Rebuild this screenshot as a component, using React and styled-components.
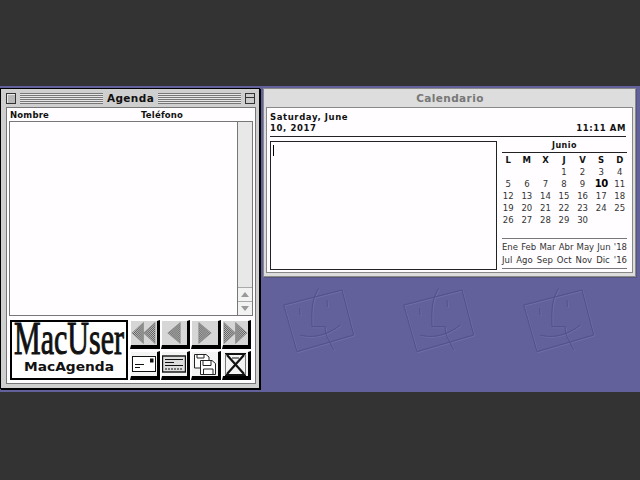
import React from "react";
import styled, { createGlobalStyle } from "styled-components";

const Global = createGlobalStyle`
  html, body { margin: 0; padding: 0; background: #333333; }
  body { width: 640px; height: 480px; overflow: hidden; font-family: "DejaVu Sans", sans-serif; }
`;

const Desktop = styled.div`
  position: relative;
  margin-top: 86px;
  height: 306px;
  background: #62619b;
`;

const Wallpaper = styled.div`
  display: flex;
  gap: 40px;
  padding: 199px 0 0 280px;
`;

const Window = styled.div`
  position: absolute;
  top: 2px;
  left: ${(p) => p.$left}px;
  width: ${(p) => p.$width}px;
  height: ${(p) => p.$height}px;
  box-sizing: border-box;
  display: flex;
  flex-direction: column;
  background: ${(p) => (p.$active ? "#cfcfcf" : "#dddddd")};
  border: 1px solid ${(p) => (p.$active ? "#000" : "#8a8a8a")};
  box-shadow: 1px 1px 0 ${(p) => (p.$active ? "#000" : "#55557f")};
`;

const TitleBar = styled.div`
  flex: none;
  height: 18px;
  display: flex;
  align-items: center;
  justify-content: center;
  gap: 4px;
  padding: 0 4px 0 5px;
`;

const TitleText = styled.div`
  font-size: 10.5px;
  font-weight: 700;
  letter-spacing: 0.4px;
  color: ${(p) => (p.$active ? "#111" : "#777")};
`;

const Stripes = styled.div`
  flex: 1;
  height: 11px;
  background: repeating-linear-gradient(to bottom, #777 0 1px, #e6e6e6 1px 2px);
`;

const CloseBox = styled.div`
  width: 10px;
  height: 11px;
  box-sizing: border-box;
  border: 1px solid #333;
  background: #b9b9b9;
  box-shadow: inset 1px 1px 0 #e8e8e8;
`;

const ZoomBox = styled.div`
  width: 10px;
  height: 11px;
  box-sizing: border-box;
  border: 1px solid #333;
  background: linear-gradient(to bottom, #ccc 0 3px, #333 3px 4px, #ccc 4px 100%);
`;

const AgendaBody = styled.div`
  flex: 1;
  margin: 0 3px 4px 5px;
  padding: 0 2px;
  background: #fffdff;
  border: 1px solid #777;
  display: flex;
  flex-direction: column;
`;

const ListHead = styled.div`
  flex: none;
  height: 13px;
  display: grid;
  grid-template-columns: 131px 1fr;
  align-items: center;
  padding-left: 1px;
  font-size: 8.5px;
  font-weight: 700;
  letter-spacing: 0.2px;
  color: #111;
`;

const List = styled.div`
  flex: none;
  height: 195px;
  box-sizing: border-box;
  border: 1px solid #777;
  display: flex;
  justify-content: flex-end;
`;

const Scrollbar = styled.div`
  width: 14px;
  border-left: 1px solid #777;
  background: #e8e8e8;
  display: flex;
  flex-direction: column;
  justify-content: flex-end;
`;

const ScrollArrow = styled.div`
  height: 13px;
  background: #f2f2f2;
  border-top: 1px solid #aaa;
  display: flex;
  align-items: center;
  justify-content: center;
`;

const Tools = styled.div`
  flex: none;
  margin-top: 4px;
  padding-left: 1px;
  display: flex;
  gap: 2px;
`;

const Logo = styled.div`
  width: 118px;
  height: 60px;
  box-sizing: border-box;
  border: 2px solid #000;
  background: #fff;
  line-height: 0;
`;

const LogoSvg = styled.svg`
  overflow: visible;
`;

const ButtonGrid = styled.div`
  display: grid;
  grid-template-columns: repeat(4, 29.5px);
  grid-auto-rows: 29px;
  gap: 2px 1px;
`;

const ToolButton = styled.div`
  box-sizing: border-box;
  display: flex;
  align-items: center;
  justify-content: center;
  background: ${(p) => (p.$light ? "#f4f4f4" : "#d6d6d6")};
  border-top: 1px solid #fff;
  border-left: 1px solid #fff;
  border-right: 3px solid #000;
  border-bottom: 4px solid #000;
`;

const CalBody = styled.div`
  flex: 1;
  margin: 0 2px 3px 2px;
  padding: 2px 6px 0 3px;
  background: #fffdff;
  border: 1px solid #888;
  display: flex;
  flex-direction: column;
`;

const CalHead = styled.div`
  flex: none;
  height: 24px;
  display: flex;
  justify-content: space-between;
  align-items: flex-end;
  padding-bottom: 2px;
  border-bottom: 1px solid #222;
`;

const DateText = styled.div`
  font-size: 8.5px;
  font-weight: 700;
  line-height: 11px;
  letter-spacing: 0.6px;
  color: #111;
`;

const CalMain = styled.div`
  flex: 1;
  display: flex;
  gap: 2px;
  margin-top: 4px;
`;

const Notes = styled.div`
  width: 227px;
  height: 129px;
  box-sizing: border-box;
  border: 1px solid #222;
  padding: 3px 2px;
`;

const Caret = styled.div`
  width: 1px;
  height: 11px;
  background: #000;
`;

const MonthPanel = styled.div`
  flex: 1;
  display: flex;
  flex-direction: column;
`;

const MonthTitle = styled.div`
  margin: 0 -1px 0 3px;
  height: 10px;
  padding-bottom: 1px;
  border-bottom: 1px solid #222;
  text-align: center;
  font-size: 8px;
  font-weight: 700;
  line-height: 10px;
  letter-spacing: 0.5px;
  color: #111;
`;

const DayGrid = styled.div`
  display: grid;
  grid-template-columns: repeat(7, 1fr);
  grid-auto-rows: 12px;
  margin: 1px -3px 0 0;
  font-size: 8.5px;
  line-height: 12px;
  text-align: center;
  color: #333;
`;

const Weekday = styled.div`
  font-weight: 700;
  color: #111;
`;

const Today = styled.div`
  font-weight: 700;
  color: #000;
  font-size: 10px;
  letter-spacing: -0.5px;
`;

const YearBlock = styled.div`
  margin: 12px -1px 0 3px;
  height: 31px;
  padding-top: 3px;
  border-top: 1px solid #777;
  border-bottom: 1px solid #777;
  box-sizing: border-box;
  display: flex;
  flex-direction: column;
  gap: 2px;
  font-size: 8.5px;
  line-height: 11px;
  color: #333;
`;

const YearRow = styled.div`
  display: flex;
  justify-content: space-between;
  white-space: nowrap;
`;

const FinderFace = () => (
  <svg width="80" height="70" viewBox="0 0 80 70" fill="none">
    {[["#6f6ea9", 1], ["#52518a", 0]].map(([color, shift]) => (
      <g key={color} stroke={color} strokeWidth="1" transform={`translate(${shift} ${shift})`}>
        <path d="M3.7 20 L62 5 L73.7 50 L17 66.7 Z" />
        <path d="M38.7 3.3 C33 12 31 22 32 41.7 L45.3 41.7 C45 46 46 48 47 51.7 L53.7 65" />
        <path d="M20.3 50 C30 53 45 52 60.3 40" />
        <path d="M19.7 23 L20 30 M47 15 L47.3 22" />
      </g>
    ))}
  </svg>
);

const LogoArt = () => (
  <LogoSvg width="114" height="56" viewBox="0 0 114 56">
    <text x="2" y="32" fontFamily="Liberation Serif, serif" fontSize="46" stroke="#111" strokeWidth="1" fill="#111" textLength="110" lengthAdjust="spacingAndGlyphs">MacUser</text>
    <text x="12" y="49" fontFamily="DejaVu Sans, sans-serif" fontWeight="700" fontSize="13" fill="#111" textLength="90" lengthAdjust="spacingAndGlyphs">MacAgenda</text>
  </LogoSvg>
);

const Hatch = () => (
  <defs>
    <pattern id="hatch" width="2" height="2" patternUnits="userSpaceOnUse">
      <rect width="2" height="2" fill="#d8d8d8" />
      <rect width="1" height="1" fill="#444" />
      <rect x="1" y="1" width="1" height="1" fill="#444" />
    </pattern>
  </defs>
);

const Arrow = ({ points }) => (
  <svg width="25" height="24" viewBox="0 0 26 24">
    <Hatch />
    {points.map((p) => (
      <polygon key={p} points={p} fill="url(#hatch)" stroke="#777" strokeWidth="0.5" />
    ))}
  </svg>
);

const Envelope = () => (
  <svg width="24" height="18" viewBox="0 0 24 18" fill="#fff" stroke="#111">
    <rect x="0.5" y="1.5" width="23" height="15" />
    <path d="M3 9.5 H12 M3 12.5 H8" />
    <rect x="18.5" y="4" width="2.5" height="3" fill="#111" />
  </svg>
);

const CardIcon = () => (
  <svg width="24" height="18" viewBox="0 0 24 18" fill="none" stroke="#111">
    <rect x="0.5" y="1" width="23" height="16" fill="#ddd" strokeWidth="1.4" />
    <path d="M3 4.5 H21 M3 7.5 H12 M3 10.5 H21" />
    <path d="M3 14 H21" strokeDasharray="2 1" />
  </svg>
);

const Floppy = () => (
  <svg width="24" height="23" viewBox="0 0 24 23" fill="#fff" stroke="#222">
    <path d="M1.5 1.5 H13 L16 4 V15 H1.5 Z" />
    <path d="M7.5 7.5 H19 L22.5 10.5 V21.5 H7.5 Z" />
    <path d="M10 7.5 V12.5 H18 V7.5 M10.5 21.5 V16 H20 V21.5" fill="none" />
    <path d="M4 1.5 V5 H11 V1.5" fill="none" />
  </svg>
);

const TrashX = () => (
  <svg width="23" height="24" viewBox="0 0 23 24" fill="none" stroke="#111">
    <path d="M1 2 H22 M1 23 H22" strokeWidth="2" />
    <path d="M1.5 2 V23 M21.5 2 V23" stroke="#777" />
    <path d="M3 3 L20 22 M20 3 L3 22" strokeWidth="2.2" />
    <path d="M8 6 H15" />
  </svg>
);

const days = ["", "", "", 1, 2, 3, 4, 5, 6, 7, 8, 9, 10, 11, 12, 13, 14, 15, 16, 17, 18, 19, 20, 21, 22, 23, 24, 25, 26, 27, 28, 29, 30];
const weekdays = ["L", "M", "X", "J", "V", "S", "D"];
const years = [
  ["Ene", "Feb", "Mar", "Abr", "May", "Jun", "'18"],
  ["Jul", "Ago", "Sep", "Oct", "Nov", "Dic", "'16"],
];

const App = () => (
  <>
    <Global />
    <Desktop>
      <Wallpaper>
        <FinderFace />
        <FinderFace />
        <FinderFace />
      </Wallpaper>

      <Window $active $left={0} $width={260} $height={301}>
        <TitleBar>
          <CloseBox />
          <Stripes />
          <TitleText $active>Agenda</TitleText>
          <Stripes />
          <ZoomBox />
        </TitleBar>
        <AgendaBody>
          <ListHead>
            <span>Nombre</span>
            <span>Teléfono</span>
          </ListHead>
          <List>
            <Scrollbar>
              <ScrollArrow>
                <svg width="8" height="5" viewBox="0 0 8 5"><path d="M4 0 L8 5 H0 Z" fill="#999" /></svg>
              </ScrollArrow>
              <ScrollArrow>
                <svg width="8" height="5" viewBox="0 0 8 5"><path d="M0 0 H8 L4 5 Z" fill="#999" /></svg>
              </ScrollArrow>
            </Scrollbar>
          </List>
          <Tools>
            <Logo><LogoArt /></Logo>
            <ButtonGrid>
              <ToolButton><Arrow points={["13,1 1,12 13,23", "25,1 13,12 25,23"]} /></ToolButton>
              <ToolButton><Arrow points={["19,1 6,12 19,23"]} /></ToolButton>
              <ToolButton><Arrow points={["7,1 20,12 7,23"]} /></ToolButton>
              <ToolButton><Arrow points={["1,1 13,12 1,23", "13,1 25,12 13,23"]} /></ToolButton>
              <ToolButton $light><Envelope /></ToolButton>
              <ToolButton $light><CardIcon /></ToolButton>
              <ToolButton $light><Floppy /></ToolButton>
              <ToolButton $light><TrashX /></ToolButton>
            </ButtonGrid>
          </Tools>
        </AgendaBody>
      </Window>

      <Window $left={263} $width={373} $height={189}>
        <TitleBar>
          <TitleText>Calendario</TitleText>
        </TitleBar>
        <CalBody>
          <CalHead>
            <DateText>Saturday, June<br />10, 2017</DateText>
            <DateText>11:11 AM</DateText>
          </CalHead>
          <CalMain>
            <Notes><Caret /></Notes>
            <MonthPanel>
              <MonthTitle>Junio</MonthTitle>
              <DayGrid>
                {weekdays.map((d) => <Weekday key={d}>{d}</Weekday>)}
                {days.map((d, i) => (d === 10 ? <Today key={i}>{d}</Today> : <div key={i}>{d}</div>))}
              </DayGrid>
              <YearBlock>
                {years.map((row) => (
                  <YearRow key={row[0]}>
                    {row.map((m) => <span key={m}>{m}</span>)}
                  </YearRow>
                ))}
              </YearBlock>
            </MonthPanel>
          </CalMain>
        </CalBody>
      </Window>
    </Desktop>
  </>
);

export default App;
